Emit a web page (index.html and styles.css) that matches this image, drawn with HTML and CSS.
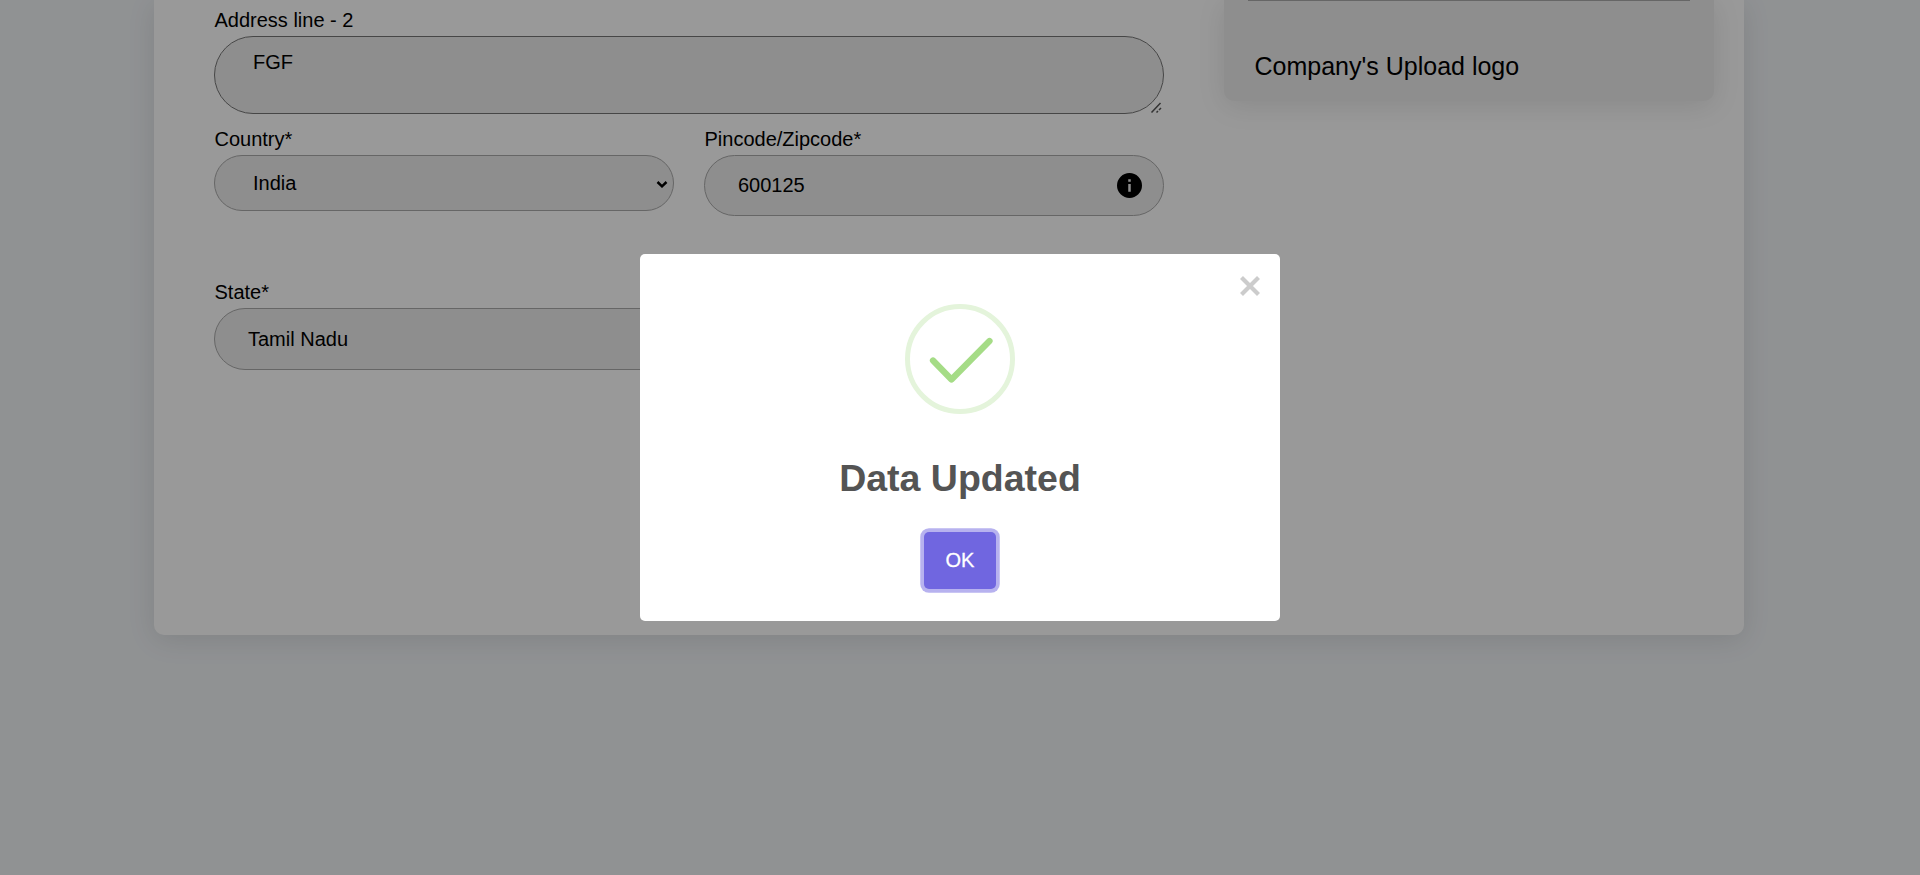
FILE: index.html
```html
<!DOCTYPE html>
<html lang="en">
<head>
<meta charset="utf-8">
<title>Company profile</title>
<link rel="stylesheet" href="styles.css">
</head>
<body>
<main class="card">
  <form class="form">
    <div class="field">
      <label class="label" for="addr">Address line - 2</label>
      <textarea class="control area" id="addr">FGF</textarea>
      <svg class="grip" viewBox="0 0 12 12"><path d="M1.500 11.500 10.500 2M6.500 11.500l1.500-1.500M9 9l2-2"/></svg>
    </div>
    <div class="row">
      <div class="field">
        <label class="label">Country*</label>
        <div class="control select"><span>India</span>
          <svg class="chevron" viewBox="0 0 12 8"><path d="M1.500 2 6 6.300 10.500 2"/></svg>
        </div>
      </div>
      <div class="field">
        <label class="label">Pincode/Zipcode*</label>
        <div class="control input"><span>600125</span>
          <svg class="info" viewBox="0 0 24 24"><path d="M12 0a12 12 0 1 0 0 24 12 12 0 0 0 0-24zm1.200 18h-2.400v-7.500h2.400zm0-9.500h-2.400V6h2.400z"/></svg>
        </div>
      </div>
    </div>
    <div class="row state-row">
      <div class="field">
        <label class="label">State*</label>
        <div class="control input"><span>Tamil Nadu</span></div>
      </div>
    </div>
  </form>
  <aside class="panel">
    <div class="panel-input"></div>
    <div class="panel-title">Company's Upload logo</div>
  </aside>
</main>
<div class="overlay">
  <section class="modal">
    <button class="close" aria-label="Close"><svg viewBox="0 0 22 22"><path d="M2.500 2.500l17 17M19.500 2.500l-17 17"/></svg></button>
    <svg class="success" viewBox="0 0 110 110">
      <circle cx="55" cy="55" r="52.500"/>
      <path d="M28 56.500 46.500 75.500 84.500 37"/>
    </svg>
    <h2 class="modal-title">Data Updated</h2>
    <button class="ok">OK</button>
  </section>
</div>
</body>
</html>
```
FILE: styles.css
```css
* { box-sizing: border-box; }
body {
  margin: 0;
  height: 875px;
  overflow: hidden;
  background: #f0f3f6;
  font: 20px/24px "Liberation Sans", Arial, sans-serif;
  color: #000;
}
.card {
  display: flex;
  gap: 60px;
  width: 1590px;
  height: 635px;
  margin-left: 154px;
  padding: 8px 30px 0 60px;
  background: #fff;
  border-radius: 0 0 10px 10px;
  box-shadow: 0 5px 28px rgba(0, 0, 0, .1);
}
.form { width: 950px; }
.field { position: relative; display: flex; flex-direction: column; }
.label { height: 28px; padding-left: .5px; }
.row { display: grid; grid-template-columns: 460px 460px; gap: 30px; align-items: start; margin-top: 13px; }
.state-row { margin-top: 64px; }
.control {
  background: #ededed;
  border: 1px solid #aaa;
  border-radius: 40px;
  font: inherit;
  color: #000;
  display: flex;
  align-items: center;
  justify-content: space-between;
}
.area { height: 78px; padding: 14px 38px; border-color: #767676; line-height: 23px; resize: none; }
.grip {
  position: absolute;
  right: 2px;
  bottom: 1px;
  width: 12px;
  height: 12px;
  fill: none;
  stroke: #555;
  stroke-width: 1.500;
}
.select { height: 56px; padding: 0 5px 0 38px; }
.input { height: 61px; padding: 0 21px 0 33px; }
.row .input span { margin-top: -1px; }
.state-row .input { height: 62px; }
.state-row .input span { margin-top: 0; }
.chevron { width: 12px; height: 8px; margin-top: 1px; fill: none; stroke: #000; stroke-width: 2.500; }
.info { width: 25px; height: 25px; }
.panel {
  width: 490px;
  height: 101px;
  margin-top: -8px;
  padding: 0 24px;
  background: #ededed;
  border-radius: 0 0 10px 10px;
  box-shadow: 0 5px 28px rgba(0, 0, 0, .1);
}
.panel-input { height: 1px; background: #aaa; }
.panel-title { margin: 50px 0 0 6.500px; font-size: 25px; line-height: 30px; }
.overlay {
  position: fixed;
  inset: 0;
  display: flex;
  align-items: center;
  justify-content: center;
  background: rgba(0, 0, 0, .4);
}
.modal {
  position: relative;
  width: 640px;
  height: 367px;
  padding-top: 50px;
  display: flex;
  flex-direction: column;
  align-items: center;
  background: #fff;
  border-radius: 5px;
}
.close {
  position: absolute;
  top: 8px;
  right: 5px;
  width: 50px;
  height: 48px;
  padding: 0;
  border: 0;
  background: none;
  display: grid;
  place-items: center;
}
.close svg { width: 22px; height: 22px; fill: none; stroke: #ccc; stroke-width: 4.200; }
.success { width: 110px; height: 110px; fill: none; flex: none; }
.success circle { stroke: #e4f4db; stroke-width: 5; }
.success path { stroke: #a5dc86; stroke-width: 6.250; stroke-linecap: round; stroke-linejoin: round; }
.modal-title { margin: 43px 0 0; font-size: 37.500px; line-height: 43px; font-weight: 700; color: #545454; }
.ok {
  width: 72px;
  height: 57px;
  margin-top: 32px;
  padding: 0;
  border: 0;
  border-radius: 5px;
  background: #7066e0;
  box-shadow: 0 0 0 3.750px rgba(112, 102, 224, .5);
  color: #fff;
  font: 500 20px "Liberation Sans", Arial, sans-serif;
  -webkit-text-stroke: .3px #fff;
}
```
